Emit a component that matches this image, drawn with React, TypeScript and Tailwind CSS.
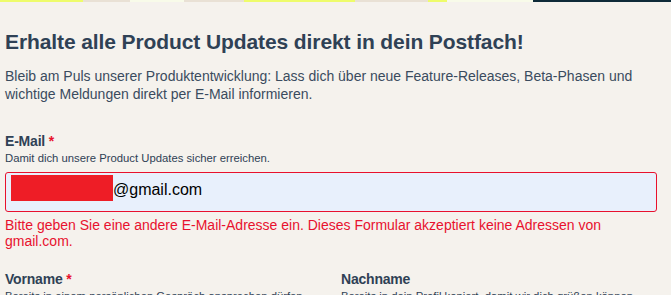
import React from "react";

export default function App() {
  const font = { fontFamily: '"Liberation Sans", Arial, sans-serif' };
  return (
    <div className="w-[671px] h-[295px] overflow-hidden bg-[#f5f2ed] text-[#33475b]" style={font}>
      <div className="flex h-[2px] w-full">
        <div className="w-[83px] bg-[#eefc6b]" />
        <div className="w-[47px] bg-[#e9e1d5]" />
        <div className="w-[54px] bg-[#f8fbe9]" />
        <div className="w-[60px] bg-[#e9e1d5]" />
        <div className="w-[111px] bg-[#eefc6b]" />
        <div className="w-[73px] bg-[#e9e1d5]" />
        <div className="w-[19px] bg-[#eefc6b]" />
        <div className="w-[86px] bg-[#f8fbe9]" />
        <div className="flex-1 bg-[#0e2a38]" />
      </div>
      <div className="pl-[5px] pr-[14px] pt-[27px]">
        <h1 className="text-[21px] leading-[26px] font-bold tracking-[-0.1px] text-[#2f4155]">
          Erhalte alle Product Updates direkt in dein Postfach!
        </h1>
        <p className="mt-[12px] text-[14px] leading-[18px] text-[#3a4b5e]">
          Bleib am Puls unserer Produktentwicklung: Lass dich über neue Feature-Releases, Beta-Phasen und
          wichtige Meldungen direkt per E-Mail informieren.
        </p>
        <div className="mt-[29px]">
          <label className="block text-[14px] leading-[18px] font-bold tracking-[-0.2px] text-[#2f4155]">
            E-Mail <span className="text-[#e8112d]">*</span>
          </label>
          <div className="mt-[1px] text-[11.3px] leading-[14px] text-[#2f4155]">
            Damit dich unsere Product Updates sicher erreichen.
          </div>
          <div className="mt-[7px] h-[40px] w-[652px] rounded-[3px] border border-[#e8112d] bg-[#e8f0fc] flex items-start pt-[2px] pl-[5px]">
            <div className="w-[102px] h-[26px] bg-[#ee1d26]" />
            <span className="mt-[2px] text-[16px] text-black leading-[26px]">
              @gmail.com
            </span>
          </div>
          <div className="mt-[5px] w-[640px] text-[14px] leading-[16px] text-[#e8112d]">
            Bitte geben Sie eine andere E-Mail-Adresse ein. Dieses Formular akzeptiert keine Adressen von gmail.com.
          </div>
        </div>
        <div className="mt-[21px] grid grid-cols-2 gap-[10px] w-[662px]">
          <div>
            <label className="block text-[14px] leading-[18px] font-bold tracking-[-0.2px] text-[#2f4155]">
              Vorname <span className="text-[#e8112d]">*</span>
            </label>
            <div className="mt-[1px] text-[11.3px] leading-[14px] text-[#2f4155] whitespace-nowrap">
              Bereits in einem persönlichen Gespräch ansprechen dürfen
            </div>
          </div>
          <div>
            <label className="block text-[14px] leading-[18px] font-bold tracking-[-0.2px] text-[#2f4155]">
              Nachname
            </label>
            <div className="mt-[1px] text-[11.3px] leading-[14px] text-[#2f4155] whitespace-nowrap">
              Bereits in dein Profil kopiert, damit wir dich grüßen können
            </div>
          </div>
        </div>
      </div>
    </div>
  );
}
